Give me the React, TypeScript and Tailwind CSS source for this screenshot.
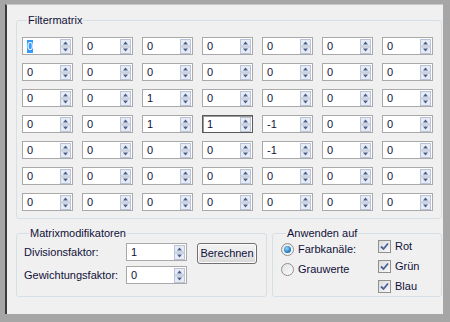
import React from "react";

const matrix = [
  ["0", "0", "0", "0", "0", "0", "0"],
  ["0", "0", "0", "0", "0", "0", "0"],
  ["0", "0", "1", "0", "0", "0", "0"],
  ["0", "0", "1", "1", "-1", "0", "0"],
  ["0", "0", "0", "0", "-1", "0", "0"],
  ["0", "0", "0", "0", "0", "0", "0"],
  ["0", "0", "0", "0", "0", "0", "0"],
];

const SpinArrows = () => (
  <svg width="11" height="15" viewBox="0 0 11 15" className="shrink-0">
    <rect x="0.5" y="0.5" width="10" height="6.5" fill="#e6ebf4" stroke="#b9c2d6" />
    <rect x="0.5" y="8" width="10" height="6.5" fill="#e6ebf4" stroke="#b9c2d6" />
    <path d="M3 5.5 L5.5 2.5 L8 5.5 Z" fill="#4a5f8c" />
    <path d="M3 9.5 L5.5 12.5 L8 9.5 Z" fill="#4a5f8c" />
  </svg>
);

const Spinner = ({
  value,
  selected,
  focused,
  className = "w-[51px]",
}: {
  value: string;
  selected?: boolean;
  focused?: boolean;
  className?: string;
}) => (
  <div
    className={`flex h-[18px] items-center justify-between bg-white pl-[4px] pr-[1px] ${className} ${
      focused ? "border border-[#5a5a5a] shadow-[inset_1px_1px_0_#9a9a9a]" : "border border-[#a9a9a9]"
    }`}
  >
    <span className={selected ? "bg-[#3399ff] text-white" : "text-[#10103a]"}>{value}</span>
    <SpinArrows />
  </div>
);

const Radio = ({ checked }: { checked?: boolean }) => (
  <span className="flex h-[13px] w-[13px] shrink-0 items-center justify-center rounded-full border border-[#8e8f8f] bg-gradient-to-br from-[#e2e2e2] to-[#fbfbfb]">
    {checked && (
      <span className="h-[7px] w-[7px] rounded-full bg-[radial-gradient(circle_at_40%_35%,#8fd8ff,#1a6fb8_70%)]" />
    )}
  </span>
);

const Check = () => (
  <span className="flex h-[13px] w-[13px] shrink-0 items-center justify-center border border-[#8f8f8f] bg-gradient-to-br from-[#dcdcdc] to-[#f8f8f8]">
    <svg width="9" height="9" viewBox="0 0 9 9">
      <path d="M1 4.5 L3.5 7 L8 1.5" fill="none" stroke="#4b5f9a" strokeWidth="1.8" />
    </svg>
  </span>
);

export default function App() {
  return (
    <div
      className="h-[322px] w-[450px] bg-[#a6a6a6] pb-[8px] pl-[5px] pr-[7px] pt-[4px] text-[11px] leading-[13px] text-[#10103a]"
      style={{ fontFamily: '"Liberation Sans", Arial, sans-serif' }}
    >
      <div className="flex h-full flex-col border-l-2 border-t border-l-[#3c3c3c] border-t-[#c8c8c8] bg-[#f0f0f0] pl-[9px] pr-[1px] pt-[9px]">
        <fieldset className="rounded-[3px] border border-[#d5dfe5] px-[5px] pb-[7px] pt-[10px]">
          <legend className="ml-[5px] px-[1px]">Filtermatrix</legend>
          <div className="grid grid-cols-[repeat(7,51px)] gap-x-[9px] gap-y-[8px]">
            {matrix.map((row, r) =>
              row.map((v, c) => (
                <Spinner
                  key={`${r}-${c}`}
                  value={v}
                  selected={r === 0 && c === 0}
                  focused={r === 3 && c === 3}
                />
              ))
            )}
          </div>
        </fieldset>

        <div className="mt-[8px] flex items-start gap-[5px]">
          <fieldset className="h-[70px] w-[251px] rounded-[3px] border border-[#d5dfe5] pl-[7px] pt-[3px]">
            <legend className="ml-[5px] px-[1px]">Matrixmodifikatoren</legend>
            <div className="flex items-start">
              <div className="flex flex-col gap-[5px]">
                <div className="flex items-center">
                  <span className="w-[102px]">Divisionsfaktor:</span>
                  <Spinner value="1" className="w-[61px]" />
                </div>
                <div className="flex items-center">
                  <span className="w-[102px]">Gewichtungsfaktor:</span>
                  <Spinner value="0" className="w-[61px]" />
                </div>
              </div>
              <button className="ml-[10px] h-[21px] w-[60px] rounded-[3px] border border-[#707070] bg-gradient-to-b from-[#f2f2f2] via-[#ebebeb] to-[#d6d6d6] text-[11px] leading-[19px] text-[#10103a] shadow-[inset_0_0_0_1px_#fcfcfc]">
                Berechnen
              </button>
            </div>
          </fieldset>

          <fieldset className="h-[70px] flex-1 rounded-[3px] border border-[#d5dfe5] pl-[8px]">
            <legend className="ml-[5px] px-[1px]">Anwenden auf</legend>
            <div className="flex">
              <div className="flex w-[97px] flex-col gap-[7px] pt-[3px]">
                <div className="flex items-center gap-[4px]">
                  <Radio checked />
                  <span>Farbkanäle:</span>
                </div>
                <div className="flex items-center gap-[4px]">
                  <Radio />
                  <span>Grauwerte</span>
                </div>
              </div>
              <div className="flex flex-col gap-[7px]">
                {["Rot", "Grün", "Blau"].map((l) => (
                  <div key={l} className="flex items-center gap-[4px]">
                    <Check />
                    <span>{l}</span>
                  </div>
                ))}
              </div>
            </div>
          </fieldset>
        </div>
      </div>
    </div>
  );
}
